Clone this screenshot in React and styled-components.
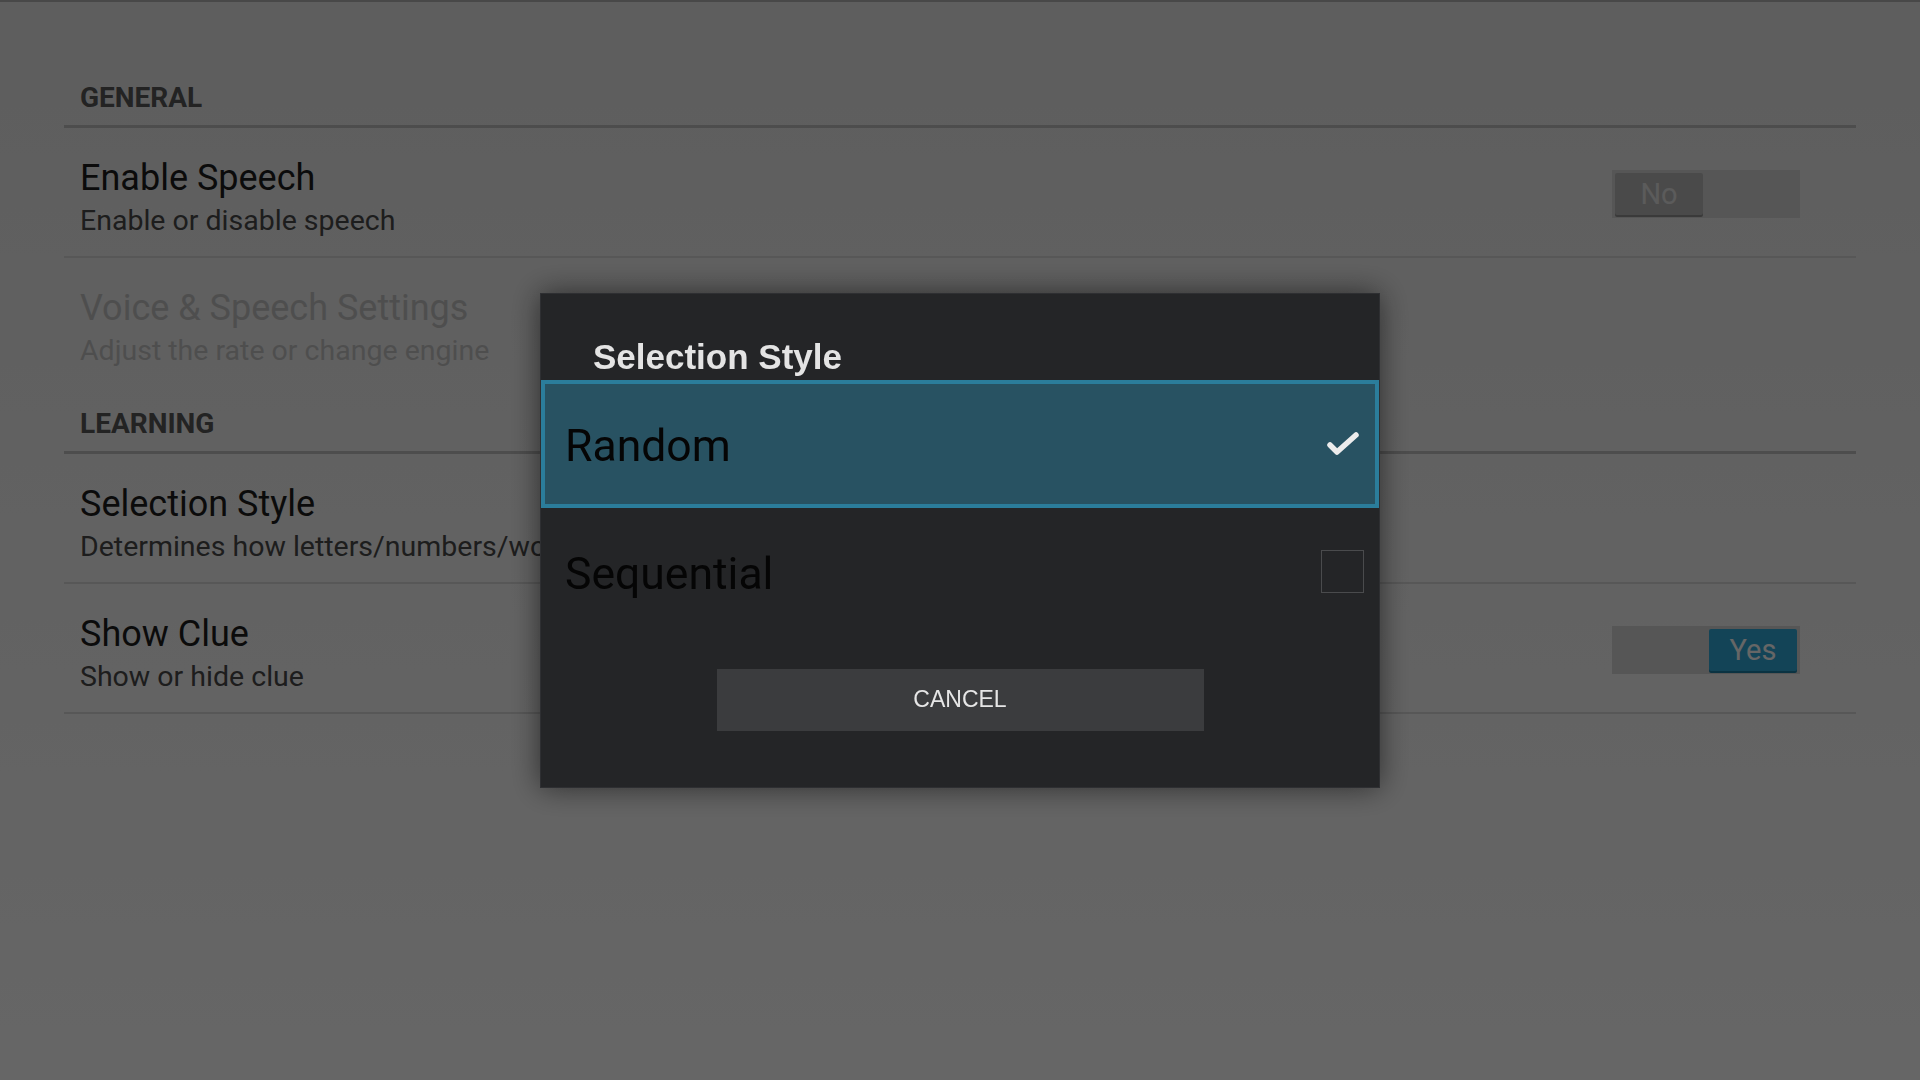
import React from 'react'
import styled, { createGlobalStyle } from 'styled-components'

const GlobalStyle = createGlobalStyle`
    html, body {
        margin: 0;
        padding: 0;
        height: 100%;
    }
    body {
        font-family: Roboto, "Noto Sans", "Liberation Sans", sans-serif;
        overflow: hidden;
    }
    * {
        box-sizing: border-box;
    }
`

const Page = styled.div`
    min-height: 100vh;
    border-top: 2px solid #b4b4b4;
    background: linear-gradient(#eaeaea, #ffffff);
    padding: 63px 64px 0;
`

const List = styled.div`
    display: flex;
    flex-direction: column;
`

const CategoryHeader = styled.div`
    padding: 16px 16px 10px;
    border-bottom: 3px solid #c0c0c0;
    font-size: 28px;
    line-height: 34px;
    font-weight: 700;
    color: #575757;
    text-transform: uppercase;
`

const Row = styled.div`
    display: flex;
    align-items: center;
    justify-content: space-between;
    padding: 29px 56px ${p => (p.$last ? '24px' : '19px')} 16px;
    border-bottom: ${p => (p.$last ? 'none' : '2px solid #dadada')};
`

const RowText = styled.div`
    display: flex;
    flex-direction: column;
    gap: 5px;
`

const RowTitle = styled.div`
    font-size: 36px;
    line-height: 42px;
    color: ${p => (p.$disabled ? '#c4c4c4' : '#1c1c1c')};
`

const RowSummary = styled.div`
    font-size: 28.5px;
    line-height: 33px;
    white-space: nowrap;
    color: ${p => (p.$disabled ? '#c4c4c4' : '#4a4a4a')};
`

const SwitchTrack = styled.div`
    width: 188px;
    height: 48px;
    margin-bottom: 6px;
    padding: 3px;
    background: #d8d8d8;
    display: flex;
    justify-content: ${p => (p.$on ? 'flex-end' : 'flex-start')};
`

const SwitchThumb = styled.div`
    width: 88px;
    height: 42px;
    border-radius: 2px;
    display: flex;
    align-items: center;
    justify-content: center;
    font-size: 29px;
    color: ${p => (p.$on ? '#ffffff' : '#e4e4e4')};
    background: ${p => (p.$on ? '#30aada' : '#b9b9b9')};
    box-shadow: 0 2px 0 ${p => (p.$on ? '#1d7fa6' : '#929292')};
`

const Overlay = styled.div`
    position: fixed;
    inset: 0;
    background: rgba(0, 0, 0, 0.6);
    display: flex;
    align-items: center;
    justify-content: center;
`

const Dialog = styled.div`
    width: 840px;
    background: #242527;
    border: 1px solid #2e2f32;
    box-shadow: 0 0 28px rgba(0, 0, 0, 0.55);
    padding-bottom: 56px;
    display: flex;
    flex-direction: column;
`

const DialogTitle = styled.div`
    padding: 42px 52px 2px;
    font-family: "Liberation Sans", Arial, sans-serif;
    font-size: 35px;
    line-height: 42px;
    font-weight: 700;
    color: #e4e4e4;
`

const Option = styled.div`
    height: 128px;
    display: flex;
    align-items: center;
    justify-content: space-between;
    padding: 0 11px 0 20px;
    border: 4px solid ${p => (p.$selected ? '#2b7d9b' : 'transparent')};
    background: ${p => (p.$selected ? '#285262' : 'transparent')};
`

const OptionLabel = styled.div`
    padding-top: 4px;
    font-size: 44.5px;
    line-height: 50px;
    color: #050505;
`

const Indicator = styled.div`
    width: 43px;
    height: 43px;
    display: flex;
    align-items: center;
    justify-content: center;
    border: 1px solid ${p => (p.$checked ? 'transparent' : '#4a4b4d')};
`

const ButtonBar = styled.div`
    display: flex;
    justify-content: center;
    padding-top: 33px;
`

const CancelButton = styled.button`
    width: 487px;
    height: 62px;
    border: none;
    background: #3b3c3e;
    color: #e6e6e6;
    font-family: "Liberation Sans", Arial, sans-serif;
    font-size: 23px;
    text-transform: uppercase;
    cursor: pointer;
`

const CheckMark = () => (
    <svg width="34" height="26" viewBox="0 0 34 26">
        <path d="M4 14 L11 21 L30 4" fill="none" stroke="#ececec" strokeWidth="5.5" strokeLinecap="round" strokeLinejoin="round" />
    </svg>
)

const Switch = ({ on }) => (
    <SwitchTrack $on={on}>
        <SwitchThumb $on={on}>{on ? 'Yes' : 'No'}</SwitchThumb>
    </SwitchTrack>
)

const options = [
    { label: 'Random', selected: true },
    { label: 'Sequential', selected: false },
]

const App = () => {
    return (
        <>
            <GlobalStyle />
            <Page>
                <List>
                    <CategoryHeader>General</CategoryHeader>
                    <Row>
                        <RowText>
                            <RowTitle>Enable Speech</RowTitle>
                            <RowSummary>Enable or disable speech</RowSummary>
                        </RowText>
                        <Switch on={false} />
                    </Row>
                    <Row $last>
                        <RowText>
                            <RowTitle $disabled>Voice &amp; Speech Settings</RowTitle>
                            <RowSummary $disabled>Adjust the rate or change engine</RowSummary>
                        </RowText>
                    </Row>
                    <CategoryHeader>Learning</CategoryHeader>
                    <Row>
                        <RowText>
                            <RowTitle>Selection Style</RowTitle>
                            <RowSummary>Determines how letters/numbers/words are chosen</RowSummary>
                        </RowText>
                    </Row>
                    <Row>
                        <RowText>
                            <RowTitle>Show Clue</RowTitle>
                            <RowSummary>Show or hide clue</RowSummary>
                        </RowText>
                        <Switch on={true} />
                    </Row>
                </List>
            </Page>
            <Overlay>
                <Dialog>
                    <DialogTitle>Selection Style</DialogTitle>
                    {options.map(o => (
                        <Option key={o.label} $selected={o.selected}>
                            <OptionLabel>{o.label}</OptionLabel>
                            <Indicator $checked={o.selected}>
                                {o.selected && <CheckMark />}
                            </Indicator>
                        </Option>
                    ))}
                    <ButtonBar>
                        <CancelButton>Cancel</CancelButton>
                    </ButtonBar>
                </Dialog>
            </Overlay>
        </>
    )
}

export default App
